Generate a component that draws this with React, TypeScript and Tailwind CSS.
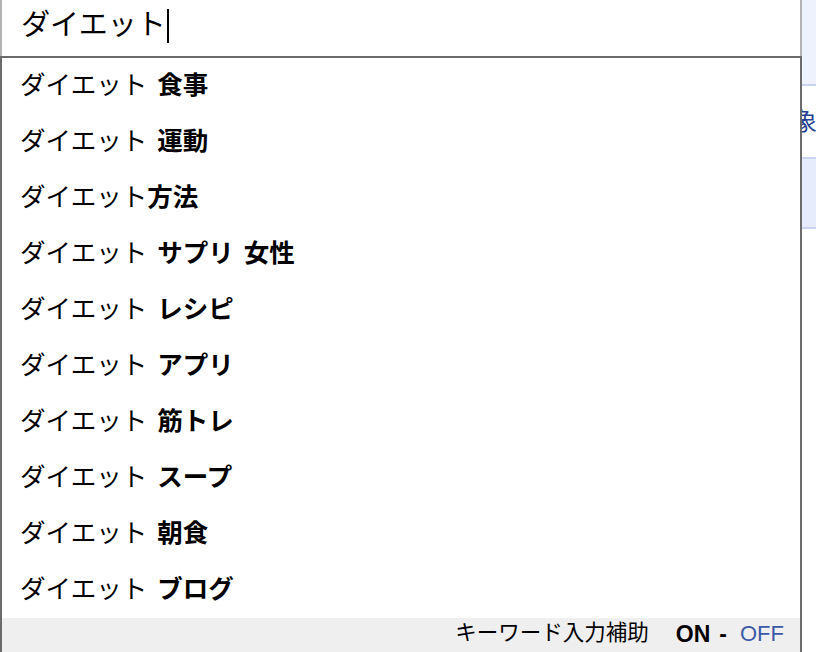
const SUGGESTIONS: { extra: string[]; spaced: boolean }[] = [
  { extra: ['食事'], spaced: true },
  { extra: ['運動'], spaced: true },
  { extra: ['方法'], spaced: false },
  { extra: ['サプリ', '女性'], spaced: true },
  { extra: ['レシピ'], spaced: true },
  { extra: ['アプリ'], spaced: true },
  { extra: ['筋トレ'], spaced: true },
  { extra: ['スープ'], spaced: true },
  { extra: ['朝食'], spaced: true },
  { extra: ['ブログ'], spaced: true },
]

const FONT = "font-['Liberation_Sans','Noto_Sans_CJK_JP',sans-serif]"

export default function App() {
  return (
    <div className={`flex w-[816px] h-[652px] overflow-hidden bg-white text-black ${FONT}`}>
      {/* Search box + suggest dropdown */}
      <div className="flex flex-col w-[802px] shrink-0">
        <div className="flex items-center h-[56px] pl-[19px] pb-[6px] border-x-2 border-[#b3b3b3] bg-white">
          <span className="text-[29px] leading-none">ダイエット</span>
          <span className="ml-[1px] w-[2px] h-[34px] bg-black mt-[2px]"></span>
        </div>
        <div className="flex flex-col flex-1 border-x-2 border-t-2 border-[#6b6b6b] bg-white">
          {SUGGESTIONS.map((s, i) => (
            <div key={i} className="flex items-center h-[56px] pl-[18px] text-[25.5px] leading-none whitespace-nowrap">
              <span>ダイエット</span>
              {s.extra.map((w, j) => (
                <span key={j} className={`font-bold ${s.spaced ? 'ml-[10px]' : ''}`}>{w}</span>
              ))}
            </div>
          ))}
          <div className="flex flex-1 items-center justify-end pr-[16px] pb-[2px] bg-[#efefef] text-[21.5px] leading-none">
            <span>キーワード入力補助</span>
            <span className="ml-[27px] text-[23px] font-bold">ON</span>
            <span className="ml-[9px] mr-[13px] text-[23px] font-bold">-</span>
            <span className="text-[22px] text-[#3a5aa6]">OFF</span>
          </div>
        </div>
      </div>

      {/* Page content behind the dropdown */}
      <div className="flex flex-col flex-1 overflow-hidden">
        <div className="h-[86px] bg-[#eef2fd] border-b-2 border-[#c9d3ee]"></div>
        <div className="flex items-center h-[73px] border-b-2 border-[#c9d3ee] bg-white">
          <span className="-ml-[9px] text-[24px] leading-none text-[#24408f] whitespace-nowrap">象</span>
        </div>
        <div className="h-[70px] bg-[#e6ecfb] border-b-2 border-[#c9d3ee]"></div>
        <div className="flex-1 bg-white"></div>
      </div>
    </div>
  )
}
